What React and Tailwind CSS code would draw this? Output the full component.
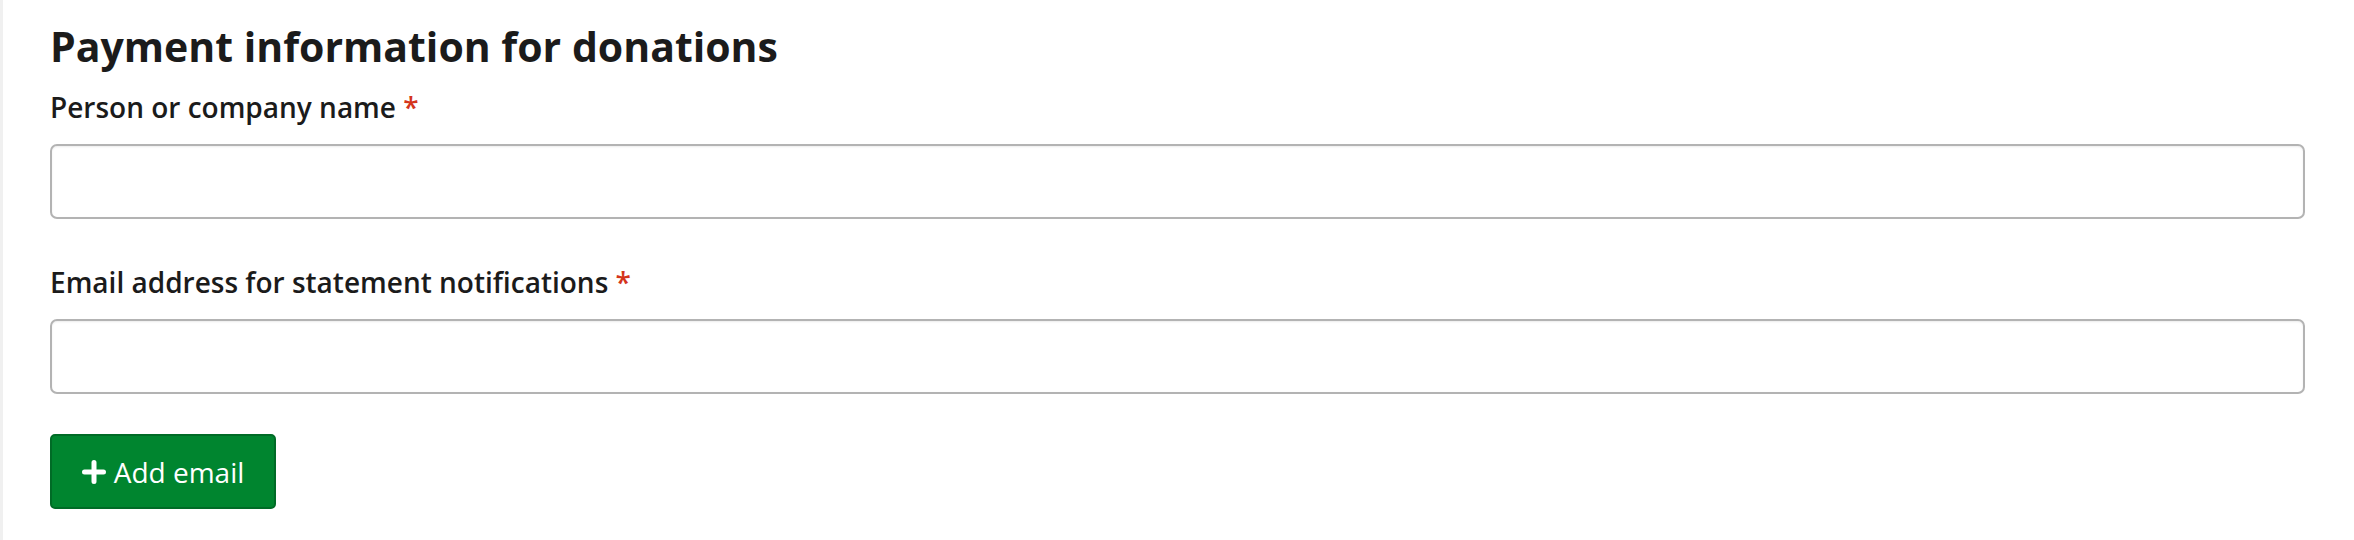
const fieldLabels = [
  "Person or company name",
  "Email address for statement notifications",
];

const PlusIcon = () => (
  <svg width="24" height="24" viewBox="0 0 24 24" className="shrink-0">
    <path
      d="M12 2.5v19M2.5 12h19"
      stroke="currentColor"
      strokeWidth="5"
      strokeLinecap="round"
    />
  </svg>
);

const Field = ({ label, first }) => (
  <div className={first ? "mt-[19px]" : "mt-[45px]"}>
    <label className="block text-[28px] leading-[36px] font-semibold text-[#1b1b1b]">
      {label} <span className="text-[#d4351c]">*</span>
    </label>
    <input
      type="text"
      className="mt-[19px] block w-full h-[75px] rounded-[7px] border-2 border-[#b3b3b3] bg-white shadow-[inset_0_1px_2px_rgba(0,0,0,0.08)] outline-none"
    />
  </div>
);

export default function App() {
  return (
    <div
      className="min-h-[540px] bg-white border-l-[3px] border-[#f0f0f0] pl-[47px] pr-[49px] pt-[22px]"
      style={{ fontFamily: '"Open Sans", "Noto Sans", sans-serif' }}
    >
      <h2 className="text-[41px] leading-[48px] font-bold text-[#1b1b1b]">
        Payment information for donations
      </h2>

      {fieldLabels.map((label, i) => (
        <Field key={label} label={label} first={i === 0} />
      ))}

      <button
        type="button"
        className="mt-[40px] flex items-center justify-center gap-[8px] w-[226px] h-[75px] rounded-[5px] border-2 border-[#006b26] bg-[#00852f] text-white text-[28px] leading-[36px]"
      >
        <PlusIcon />
        Add email
      </button>
    </div>
  );
}
